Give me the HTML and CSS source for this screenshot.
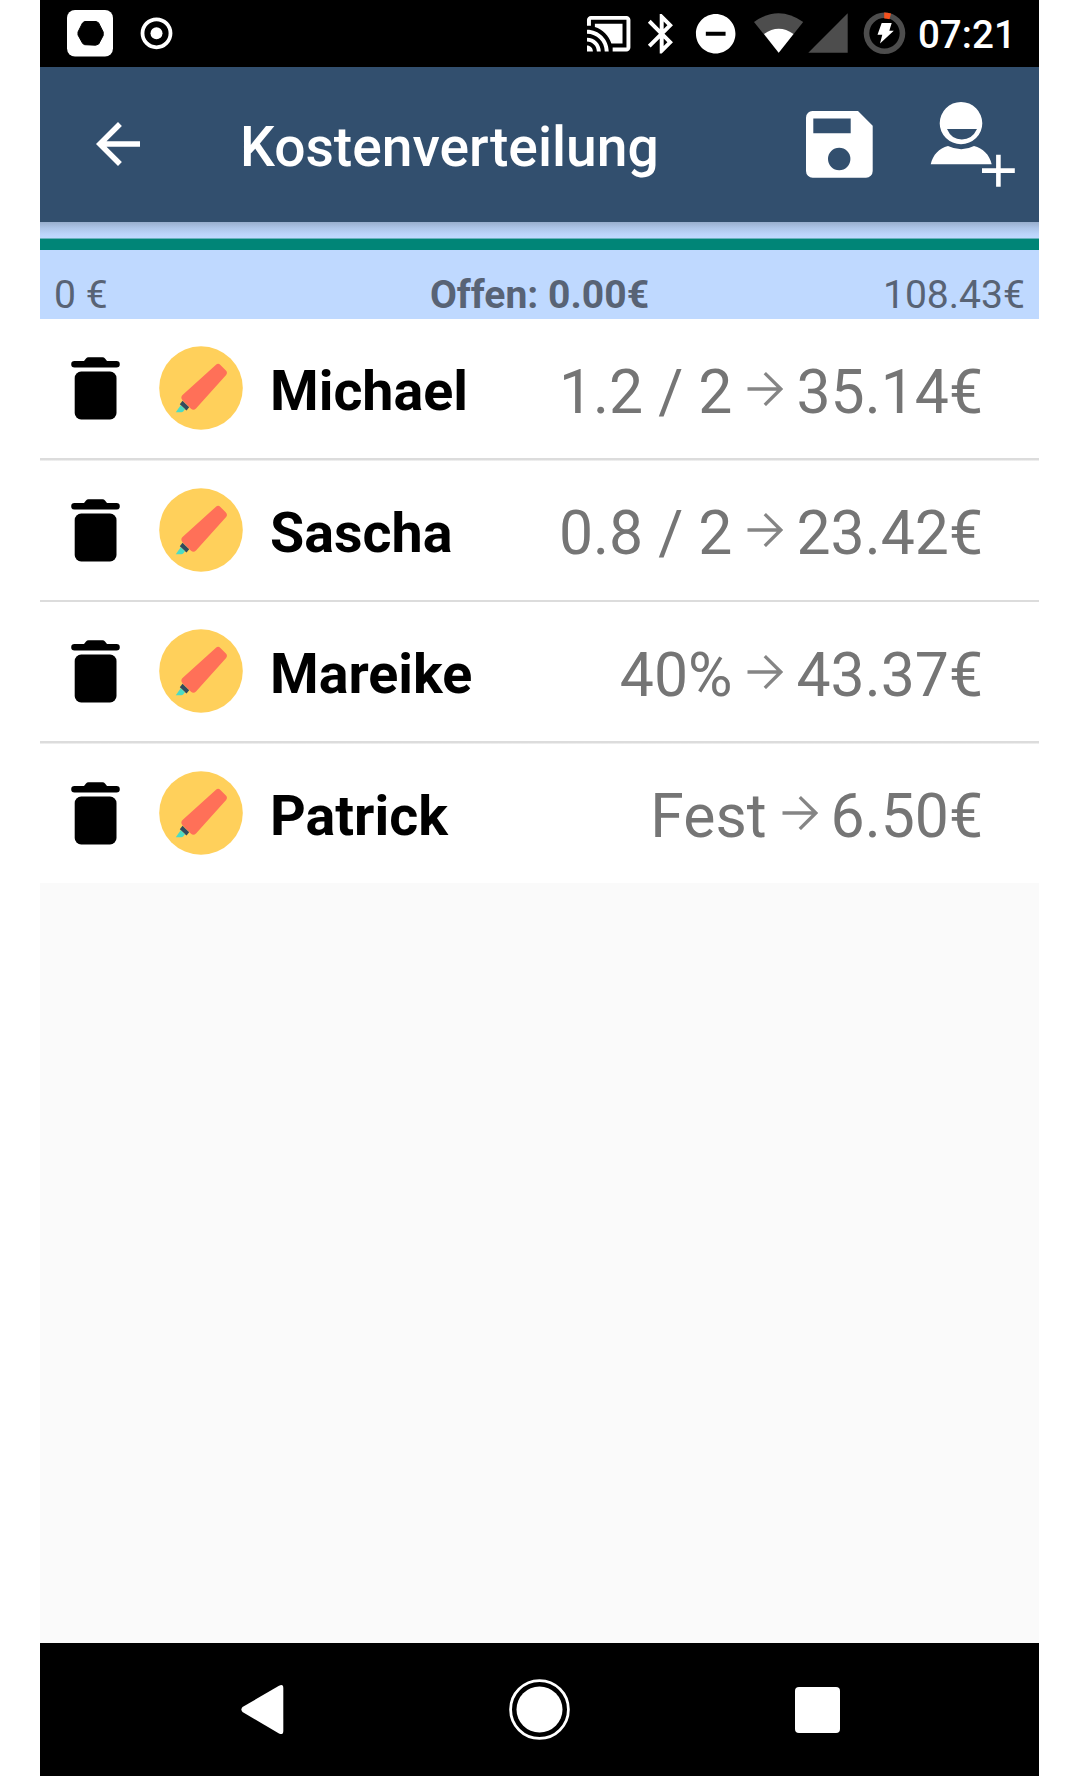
FILE: index.html
```html
<!DOCTYPE html>
<html lang="de">
<head>
<meta charset="utf-8">
<title>Kostenverteilung</title>
<link rel="stylesheet" href="styles.css">
</head>
<body>
<svg class="symbols" aria-hidden="true">
  <symbol id="trash" viewBox="71 357 49 63">
    <path d="M74.5 361H84l2-2.4q1-1.3 2.500-1.300h14q1.500 0 2.500 1.300l2 2.400h9.500a3.300 3.300 0 0 1 0 6.600h-42a3.300 3.300 0 0 1 0-6.600z"/>
    <rect x="74.700" y="371.500" width="41.800" height="48" rx="6.500"/>
  </symbol>
  <symbol id="marker" viewBox="159 346.500 84 84">
    <circle cx="201" cy="388.500" r="41.800" fill="#ffd05b"/>
    <path d="M216 365.200q2.200-1.800 4.400.2l5.500 5.700q2 2.200.2 4.500L196 409q-2.500 2.500-5 .3l-8.500-8.500q-2.500-3 .3-5.500z" fill="#ff7058"/>
    <path d="M182.500 401.300l6.700 6.500-2.700 3.300-6.700-6.300z" fill="#324a5e"/>
    <path d="M180.700 405.800l4.300 4-1.800 2.200q-.8.800-2 .8H175.800z" fill="#4cdbc4"/>
  </symbol>
  <symbol id="arrow" viewBox="747 371.500 36 34">
    <path d="M747.500 388.500h33.500M764.800 372.700l16 15.800-16 15.900" fill="none" stroke="#858585" stroke-width="3.300"/>
  </symbol>
</svg>
<div class="screen">
  <header class="status">
    <svg class="app" viewBox="67 10 46 47"><rect x="67" y="10" width="46" height="46.500" rx="8" fill="#fff"/><path d="M84.500 21.500h11.500l2.500 1.200 4.700 9.300v3.500l-4.500 8.500-3 1.200-11-.5-2-1.200-4.700-8.500V32l4.500-9z" fill="#000" stroke="#000"/></svg>
    <svg class="ring" viewBox="140 17 33 33"><circle cx="156.500" cy="33.300" r="14" fill="none" stroke="#fff" stroke-width="3.800"/><circle cx="156.500" cy="33.300" r="6" fill="#fff"/></svg>
    <svg class="glyph cast" viewBox="0 0 24 24"><path d="M1 18v3h3c0-1.660-1.340-3-3-3zm0-4v2c2.760 0 5 2.240 5 5h2c0-3.870-3.130-7-7-7zm18-7H5v1.630c3.960 1.280 7.090 4.410 8.370 8.370H19V7zM1 10v2c4.970 0 9 4.030 9 9h2c0-6.080-4.930-11-11-11zm20-7H3c-1.100 0-2 .9-2 2v3h2V5h18v14h-7v2h7c1.100 0 2-.9 2-2V5c0-1.100-.9-2-2-2z"/></svg>
    <svg class="glyph bluetooth" viewBox="0 0 24 24"><path d="M17.710 7.710L12 2h-1v7.590L6.410 5 5 6.410 10.590 12 5 17.590 6.410 19 11 14.410V22h1l5.710-5.710-4.300-4.290 4.300-4.290zM13 5.830l1.880 1.880L13 9.590V5.830zm1.880 10.460L13 18.170v-3.760l1.880 1.880z"/></svg>
    <svg class="glyph dnd" viewBox="0 0 24 24"><path d="M12 2C6.480 2 2 6.480 2 12s4.480 10 10 10 10-4.480 10-10S17.520 2 12 2zm5 11H7v-2h10v2z"/></svg>
    <svg class="wifi" viewBox="754 13 50 40"><path d="M754 22Q778.500 4.500 803.200 22L778.700 52.700z" fill="#4d4d4d"/><path d="M764 34Q778.700 23.500 793.500 34L778.700 52.700z" fill="#fff"/></svg>
    <svg class="signal" viewBox="808 13 40 40"><path d="M808.300 52.700L847.700 13.300V52.700z" fill="#4d4d4d"/></svg>
    <svg class="battery" viewBox="863 12 43 43"><circle cx="884.500" cy="33.300" r="18" fill="none" stroke="#4d4d4d" stroke-width="5.600"/><path d="M884.200 12.400q3.500 0 6.900 1.100l-1.600 5.700q-2.500-.8-5.300-.8z" fill="#f4511e"/><path d="M881.700 23h10l-2.400 7.700h4.500L880 43.500l2.300-8.800h-4.800z" fill="#fff"/></svg>
    <time class="clock">07:21</time>
  </header>
  <div class="appbar">
    <svg class="back" viewBox="0 0 24 24"><path d="M20 11H7.830l5.590-5.590L12 4l-8 8 8 8 1.410-1.410L7.830 13H20v-2z"/></svg>
    <h1 class="title">Kostenverteilung</h1>
    <svg class="save" viewBox="806 111 67 67"><path fill-rule="evenodd" d="M813 111h45l14.700 14.700V171a6.700 6.700 0 0 1-6.700 6.700h-53.300A6.700 6.700 0 0 1 806 171v-53.300A6.700 6.700 0 0 1 813 111zM813.300 118.500v14.700h37.400v-14.700zM828 159a11.200 11.200 0 1 0 22.400 0a11.200 11.200 0 1 0-22.400 0z"/></svg>
    <svg class="add-person" viewBox="930 101 86 87"><path fill-rule="evenodd" d="M939.700 123.300a21.300 21.300 0 1 1 42.600 0a21.300 20.800 0 1 1-42.600 0zM947 129q4.500 10.500 14.800 10.500T977 129z"/><path d="M930.700 164.300C933 154.500 939 148.500 948 146q13.500 6.500 26 0c9 2.500 15.500 8.500 17.700 18.300z"/><path d="M982 168.300h14.100v-13.600h4.600v13.600h14.100v4.600h-14.100v13.800h-4.600v-13.800H982z"/></svg>
  </div>
  <section class="summary">
    <div class="progress"></div>
    <div class="amounts"><span>0 €</span><strong>Offen: 0.00€</strong><span class="total">108.43€</span></div>
  </section>
  <ul class="people">
    <li class="person"><svg class="trash"><use href="#trash"/></svg><svg class="marker"><use href="#marker"/></svg><b class="name">Michael</b><span class="share">1.2 / 2</span><svg class="arrow"><use href="#arrow"/></svg><span class="cost">35.14€</span></li>
    <li class="person"><svg class="trash"><use href="#trash"/></svg><svg class="marker"><use href="#marker"/></svg><b class="name">Sascha</b><span class="share">0.8 / 2</span><svg class="arrow"><use href="#arrow"/></svg><span class="cost">23.42€</span></li>
    <li class="person"><svg class="trash"><use href="#trash"/></svg><svg class="marker"><use href="#marker"/></svg><b class="name">Mareike</b><span class="share">40%</span><svg class="arrow"><use href="#arrow"/></svg><span class="cost">43.37€</span></li>
    <li class="person"><svg class="trash"><use href="#trash"/></svg><svg class="marker"><use href="#marker"/></svg><b class="name">Patrick</b><span class="share">Fest</span><svg class="arrow"><use href="#arrow"/></svg><span class="cost">6.50€</span></li>
  </ul>
  <nav class="navbar">
    <svg class="nav-back" viewBox="241 1684 43 51"><path d="M279 1685.800q4.300-2.300 4.300 2.200v43q0 4.500-4.300 2.500L242.500 1712q-2.200-2.500 0-5z"/></svg>
    <svg class="nav-home" viewBox="0 0 61 61"><circle cx="30.500" cy="30.500" r="28.900" fill="none" stroke="#fff" stroke-width="2.800"/><circle cx="30.500" cy="30.500" r="23"/></svg>
    <div class="nav-recent"></div>
  </nav>
</div>
</body>
</html>
```

FILE: styles.css
```css
* { box-sizing: border-box; }
body { margin: 0; background: #fff; font-family: Roboto, sans-serif; }
svg { display: block; flex: none; fill: #fff; }
.symbols { display: none; }

.screen {
  display: flex;
  flex-direction: column;
  width: 999px;
  height: 1776px;
  margin-left: 40px;
  background: #fafafa;
}

.status {
  display: flex;
  align-items: center;
  height: 66.5px;
  padding-left: 27px;
  background: #000;
}
.app { width: 46px; height: 47px; }
.ring { width: 33px; height: 33px; margin-left: 27px; }
.glyph { width: 47.4px; height: 47.4px; margin-top: 1px; }
.cast { margin-left: 411.7px; }
.bluetooth { margin-left: 6.4px; }
.dnd { margin-left: 6.1px; }
.wifi { width: 50px; height: 40px; margin-left: 14.600px; }
.signal { width: 40px; height: 40px; margin-left: 4px; }
.battery { width: 43px; height: 43px; margin-left: 15px; }
.clock {
  margin-left: 12px;
  padding-top: 3px;
  color: #fff;
  font-size: 38.600px;
  font-weight: 500;
  line-height: 46px;
}

.appbar {
  display: flex;
  align-items: center;
  height: 155.5px;
  padding-left: 45px;
  background: #324f6e;
}
.back { width: 66px; height: 66px; }
.title {
  width: 566px;
  margin: 6px 0 0 89px;
  color: #fff;
  font-size: 55.200px;
  font-weight: 500;
  line-height: 66px;
}
.save { width: 67px; height: 67px; }
.add-person { width: 86px; height: 87px; margin: .5px 0 0 57px; }

.summary {
  height: 97px;
  padding-top: 16px;
  background: linear-gradient(#98aecd, #adc5e8 6px, #bbd4fa 12px, #bfd9ff 16px) top / 100% 16px no-repeat #bfd9ff;
}
.progress { height: 12px; border-top: 1px solid #69b2bd; background: #008577; }
.amounts {
  display: grid;
  grid-template-columns: 1fr auto 1fr;
  padding: 23px 14px 0;
  color: #586375;
  font-size: 39.100px;
  line-height: 45px;
}
.total { text-align: right; }

.people { margin: 0; padding: 0; list-style: none; background: #fff; }
.person {
  display: flex;
  align-items: center;
  height: 141.5px;
  padding: 0 56px 2.500px 31px;
  background: linear-gradient(#dcdcdc, #dcdcdc) bottom / 100% 2.500px no-repeat;
}
.person:last-child { height: 139px; padding-bottom: 0; background: none; }
.trash { width: 49px; height: 63px; fill: #000; }
.marker { width: 84px; height: 84px; margin: -.4px 0 0 39px; }
.name {
  margin: 5px auto 0 27px;
  color: #000;
  font-size: 55.600px;
  line-height: 66px;
}
.share, .cost { margin-top: 8px; color: #757575; font-size: 60.700px; line-height: 72px; }
.arrow { width: 36px; height: 34px; margin: 0 13px 0 15px; }

.navbar {
  display: flex;
  align-items: center;
  height: 133px;
  margin-top: auto;
  padding-left: 201px;
  background: #000;
}
.nav-back { width: 43px; height: 51px; }
.nav-home { width: 61px; height: 61px; margin-left: 225px; }
.nav-recent { width: 45.500px; height: 46px; margin-left: 224.500px; border-radius: 4px; background: #fff; }
```
